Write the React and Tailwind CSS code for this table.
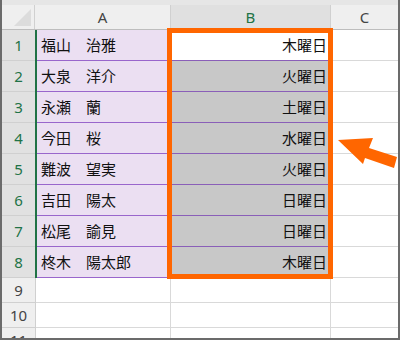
import React from "react";

const rows = [
  ["福山　治雅", "木曜日"],
  ["大泉　洋介", "火曜日"],
  ["永瀬　蘭", "土曜日"],
  ["今田　桜", "水曜日"],
  ["難波　望実", "火曜日"],
  ["吉田　陽太", "日曜日"],
  ["松尾　諭見", "日曜日"],
  ["柊木　陽太郎", "木曜日"],
];

const font = { fontFamily: '"Noto Sans", "Noto Sans CJK JP", sans-serif' };

const App = () => {
  return (
    <div
      className="relative w-[400px] h-[340px] overflow-hidden bg-white border-x-2 border-b-2 border-[#6b6b6b] text-[15px]"
      style={font}
    >
      <div className="h-[5px] bg-[#e6e6e6]" />

      {/* column headers */}
      <div className="flex h-[25px] bg-[#efefef] border-b border-[#bdbdbd]">
        <div className="w-[33px] relative border-r border-[#d0d0d0]">
          <div className="absolute right-[3px] bottom-[3px] w-0 h-0 border-l-[17px] border-l-transparent border-b-[17px] border-b-[#dcdcdc]" />
        </div>
        <div className="w-[136px] flex items-center justify-center text-[#444] border-r border-[#d0d0d0]">A</div>
        <div className="w-[160px] flex items-center justify-center text-[#217346] bg-[#e0e0e0] border-r border-[#d0d0d0]">B</div>
        <div className="flex-1 flex items-center justify-center text-[#444]">C</div>
      </div>

      {rows.map(([name, day], i) => (
        <div key={i} className="flex h-[31px]">
          <div className="w-[33px] flex items-center justify-center bg-[#e1e1e1] text-[#217346] border-b border-[#d0d0d0]">
            {i + 1}
          </div>
          <div className="w-[2px] bg-[#217346]" />
          <div className="w-[135px] flex items-center pl-[4px] bg-[#ebdff2] border-b border-[#9966cc] text-[#111]">
            {name}
          </div>
          <div
            className={`w-[160px] flex items-center justify-end pr-[5px] border-b border-[#8a5fb8] text-[#111] ${
              i === 0 ? "bg-white" : "bg-[#c8c8c8]"
            }`}
          >
            {day}
          </div>
          <div className="flex-1 border-b border-l border-[#d9d9d9]" />
        </div>
      ))}

      {[9, 10, 11].map((n) => (
        <div key={n} className="flex h-[25px]">
          <div className="w-[34px] flex items-center justify-center bg-[#efefef] text-[#444] border-b border-r border-[#d0d0d0]">
            {n}
          </div>
          <div className="w-[135px] border-b border-r border-[#d9d9d9]" />
          <div className="w-[160px] border-b border-r border-[#d9d9d9]" />
          <div className="flex-1 border-b border-[#d9d9d9]" />
        </div>
      ))}

      {/* highlight over B1:B8 */}
      <div className="absolute left-[165px] top-[28px] w-[166px] h-[251px] border-[5px] border-[#ff6600]" />

      <svg className="absolute left-0 top-0" width="400" height="340">
        <polygon
          points="336,140 371,138 367,148 395,157 392,168 363,158 361,164"
          fill="#ff6600"
        />
      </svg>
    </div>
  );
};

export default App;
